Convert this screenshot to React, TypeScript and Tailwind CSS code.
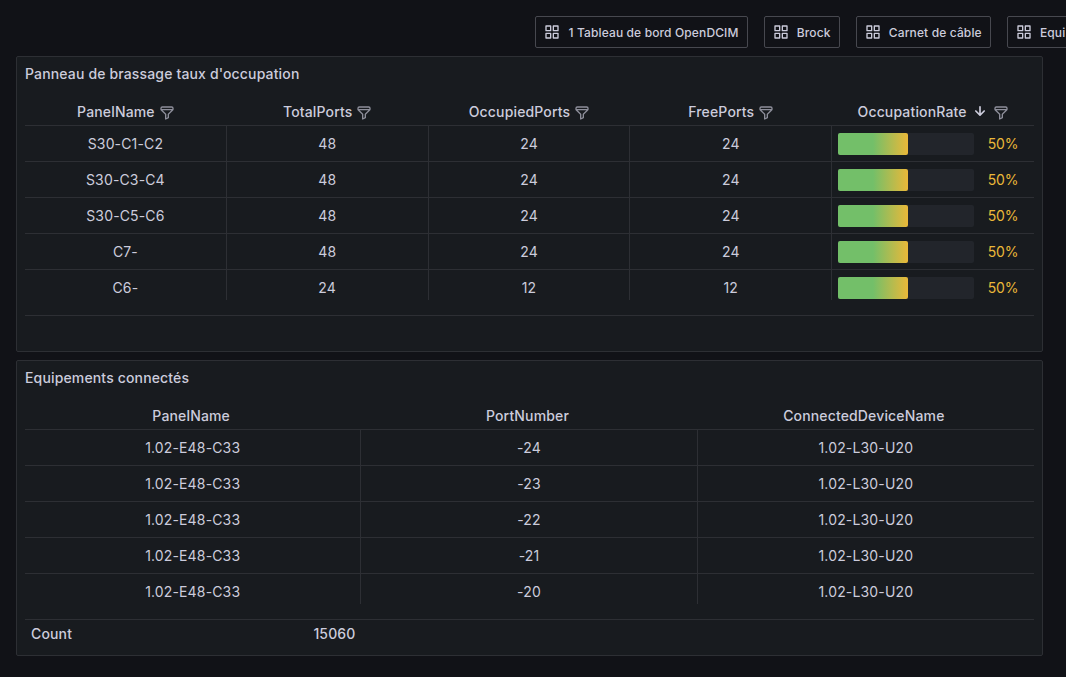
import type { ReactNode } from "react";

const APPS =
  "M10,13H3a1,1,0,0,0-1,1v7a1,1,0,0,0,1,1h7a1,1,0,0,0,1-1V14A1,1,0,0,0,10,13ZM9,20H4V15H9ZM21,2H14a1,1,0,0,0-1,1v7a1,1,0,0,0,1,1h7a1,1,0,0,0,1-1V3A1,1,0,0,0,21,2ZM20,9H15V4h5Zm1,4H14a1,1,0,0,0-1,1v7a1,1,0,0,0,1,1h7a1,1,0,0,0,1-1V14A1,1,0,0,0,21,13Zm-1,7H15V15h5ZM10,2H3A1,1,0,0,0,2,3v7a1,1,0,0,0,1,1h7a1,1,0,0,0,1-1V3A1,1,0,0,0,10,2ZM9,9H4V4H9Z";
const FILTER =
  "M19,2H5A3,3,0,0,0,2,5V6.17a3,3,0,0,0,.25,1.2l0,.06a2.81,2.81,0,0,0,.59.86L9,14.41V21a1,1,0,0,0,.47.85A1,1,0,0,0,10,22a1,1,0,0,0,.45-.11l4-2A1,1,0,0,0,15,19V14.41l6.12-6.12a2.81,2.81,0,0,0,.59-.86l0-.06A3,3,0,0,0,22,6.17V5A3,3,0,0,0,19,2ZM13.29,13.29A1,1,0,0,0,13,14v4.38l-2,1V14a1,1,0,0,0-.29-.71L5.41,8H18.59ZM20,6H4V5A1,1,0,0,1,5,4H19a1,1,0,0,1,1,1Z";
const ARROW_DOWN =
  "M17.71,11.29a1,1,0,0,0-1.42,0L13,14.59V7a1,1,0,0,0-2,0v7.59l-3.29-3.3a1,1,0,0,0-1.42,1.42l5,5a1,1,0,0,0,.33.21.94.94,0,0,0,.76,0,1,1,0,0,0,.33-.21l5-5A1,1,0,0,0,17.71,11.29Z";

function Icon({ d, className }: { d: string; className: string }) {
  return (
    <svg viewBox="0 0 24 24" fill="currentColor" className={`shrink-0 ${className}`}>
      <path d={d} />
    </svg>
  );
}

function DashboardLink({ label }: { label: string }) {
  return (
    <a className="flex h-8 shrink-0 items-center gap-2 rounded-xs border border-[#47484f] px-2 text-xs font-medium tracking-[0.13px]">
      <Icon d={APPS} className="size-4" />
      <span className="pt-px pl-[0.2px]">{label}</span>
    </a>
  );
}

function Panel({ title, children, footer }: { title: string; children: ReactNode; footer?: ReactNode }) {
  return (
    <section className="flex h-[296px] w-[1027px] flex-col rounded-xs border border-[#2d2f34] bg-[#181b1f] px-2">
      <h2 className="h-[33px] text-sm leading-[34px] font-medium tracking-[0.15px]">{title}</h2>
      <div className="h-[210px] overflow-hidden">{children}</div>
      <div className="mt-[15px] flex h-9 items-center border-t border-[#2d2f34]">{footer}</div>
    </section>
  );
}

const panels = [
  ["S30-C1-C2", "48", "24", "24", 50],
  ["S30-C3-C4", "48", "24", "24", 50],
  ["S30-C5-C6", "48", "24", "24", 50],
  ["C7-", "48", "24", "24", 50],
  ["C6-", "24", "12", "12", 50],
] as const;

const ports = ["-24", "-23", "-22", "-21", "-20"];

const cell = "flex items-center justify-center border-r border-[#2d2f34] last:border-r-0";
const row = "h-9 border-b border-[#2d2f34] last:border-b-transparent";

export default function App() {
  return (
    <div className="h-[677px] w-[1066px] overflow-hidden bg-[#111217] font-['Inter',sans-serif] text-sm tracking-[0.15px] text-[#ccccdc]">
      <nav className="flex h-14 gap-4 pt-4 pl-[535.3px]">
        <DashboardLink label="1 Tableau de bord OpenDCIM" />
        <DashboardLink label="Brock" />
        <DashboardLink label="Carnet de câble" />
        <DashboardLink label="Equi" />
      </nav>
      <main className="flex flex-col gap-2 pl-4">
        <Panel title="Panneau de brassage taux d'occupation">
          <div className={`grid grid-cols-5 pt-1 ${row} font-medium`}>
            {["PanelName", "TotalPorts", "OccupiedPorts", "FreePorts", "OccupationRate"].map((name) => (
              <div key={name} className="flex items-center justify-center pt-[5px]">
                <span>{name}</span>
                {name === "OccupationRate" && <Icon d={ARROW_DOWN} className="-mr-px mb-[2px] ml-[3px] size-5" />}
                <Icon d={FILTER} className="mt-px ml-1 size-4 text-[#8d8e9a]" />
              </div>
            ))}
          </div>
          {panels.map(([name, total, occupied, free, rate]) => (
            <div key={name} className={`grid grid-cols-5 ${row}`}>
              <div className={cell}>{name}</div>
              <div className={cell}>{total}</div>
              <div className={cell}>{occupied}</div>
              <div className={cell}>{free}</div>
              <div className="flex items-center pl-[6px]">
                <div className="h-[22px] w-[136px] rounded-xs bg-[#22252b]">
                  <div
                    className="h-full rounded-xs bg-[linear-gradient(90deg,#73bf69_0%,#73bf69_50%,#eab839_100%)]"
                    style={{ width: `${rate + 1.5}%` }}
                  />
                </div>
                <span className="ml-[13.5px] tracking-[-0.1px] text-[#eab839]">{rate}%</span>
              </div>
            </div>
          ))}
        </Panel>
        <Panel
          title="Equipements connectés"
          footer={
            <div className="flex w-[336px] justify-between pr-[5.5px] pb-[7px] pl-[6px] font-medium">
              <span>Count</span>
              <span>15060</span>
            </div>
          }
        >
          <div className={`grid grid-cols-3 pt-1 ${row} font-medium`}>
            {["PanelName", "PortNumber", "ConnectedDeviceName"].map((name) => (
              <div key={name} className="flex items-center justify-center pt-1 pr-1">
                {name}
              </div>
            ))}
          </div>
          {ports.map((port) => (
            <div key={port} className={`grid grid-cols-3 ${row}`}>
              <div className={cell}>1.02-E48-C33</div>
              <div className={cell}>{port}</div>
              <div className={cell}>1.02-L30-U20</div>
            </div>
          ))}
        </Panel>
      </main>
    </div>
  );
}
